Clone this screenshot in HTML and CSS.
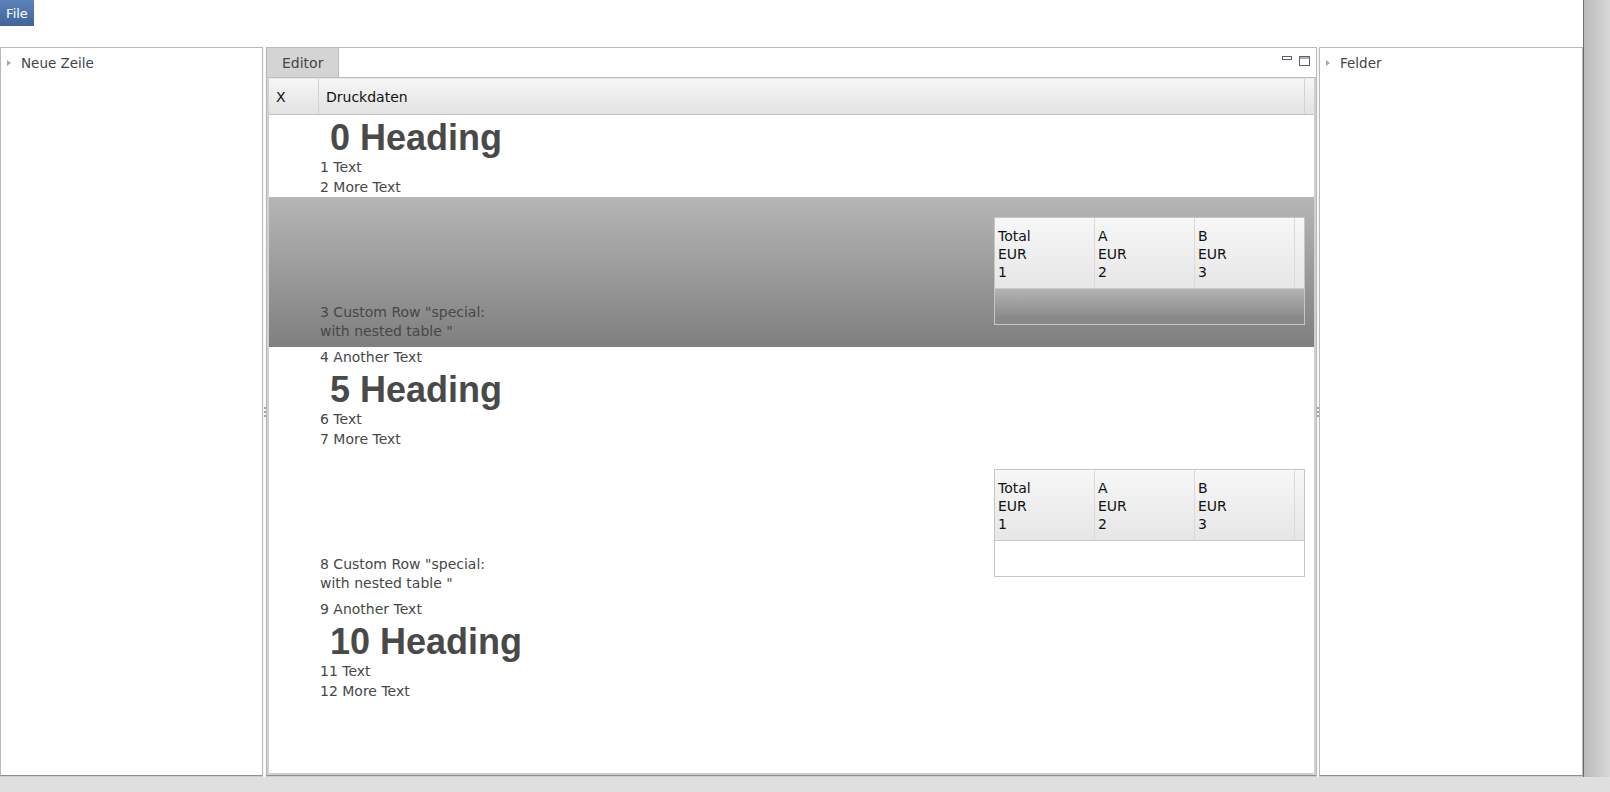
FILE: index.html
```html
<!DOCTYPE html>
<html lang="de">
<head>
    <meta charset="UTF-8">
    <meta name="viewport" content="width=device-width, initial-scale=1.0">
    <title>Druckdaten Editor</title>
    <link rel="stylesheet" href="styles.css">
</head>
<body>

<div class="app">
    <div class="menubar">
        <button class="menu-file">File</button>
    </div>

    <div class="workspace">
        <div class="panel side">
            <div class="tree-item"><span class="arrow"></span>Neue Zeile</div>
        </div>

        <div class="divider"><span class="grip"></span></div>

        <div class="panel center">
            <div class="tabbar">
                <div class="tab">Editor</div>
                <div class="win-btns">
                    <svg width="10" height="5" viewBox="0 0 10 5"><rect x="0.5" y="0.5" width="9" height="3" fill="none" stroke="#5a5f6e"/></svg>
                    <svg width="11" height="10" viewBox="0 0 11 10"><rect x="0.5" y="0.5" width="10" height="9" fill="none" stroke="#5a5f6e"/><line x1="0" y1="2" x2="11" y2="2" stroke="#5a5f6e"/></svg>
                </div>
            </div>
            <div class="tab-content">
                <div class="grid-head">
                    <div class="hc col-x">X</div>
                    <div class="hc col-main">Druckdaten</div>
                    <div class="hc col-fill"></div>
                </div>
                <div id="rows" class="grid-body"></div>
            </div>
        </div>

        <div class="divider narrow"><span class="grip"></span></div>

        <div class="panel side">
            <div class="tree-item"><span class="arrow"></span>Felder</div>
        </div>
    </div>
</div>

<script>
    // Zeilen-Muster wiederholt sich alle 5 Einträge
    const rows = document.getElementById("rows");
    const selectedRow = 3;

    function nestedTable() {
        return '<div class="nested">' +
            '<div class="nested-head">' +
            '<div class="ncell">Total<br>EUR<br>1</div>' +
            '<div class="ncell">A<br>EUR<br>2</div>' +
            '<div class="ncell">B<br>EUR<br>3</div>' +
            '<div class="ncell fill"></div>' +
            '</div>' +
            '<div class="nested-body"></div>' +
            '</div>';
    }

    for (let i = 0; i <= 12; i++) {
        const row = document.createElement("div");
        const kind = i % 5;
        row.classList.add("row");

        if (kind === 0) {
            row.classList.add("heading");
            row.textContent = i + " Heading";
        } else if (kind === 1) {
            row.textContent = i + " Text";
        } else if (kind === 2) {
            row.textContent = i + " More Text";
        } else if (kind === 3) {
            row.classList.add("custom");
            if (i === selectedRow) row.classList.add("selected");
            row.innerHTML = '<div class="custom-text">' + i + ' Custom Row "special:<br>with nested table "</div>' + nestedTable();
        } else {
            row.textContent = i + " Another Text";
        }
        rows.appendChild(row);
    }
</script>

</body>
</html>
```

FILE: styles.css
```css
/* Grundlayout */
html, body {
    margin: 0;
    padding: 0;
}

body {
    background: #dfdfdf linear-gradient(to right, #bababa, #d8d8d8) no-repeat 1584px 0 / 26px 777px;
    font-family: "DejaVu Sans", Verdana, sans-serif;
    font-size: 14px;
    color: #333;
}

.app {
    width: 1584px;
    height: 777px;
    box-sizing: border-box;
    background-color: white;
    border-right: 1px solid #6e6e6e;
    display: flex;
    flex-direction: column;
}

/* Menüleiste */
.menubar {
    height: 47px;
    flex: none;
}

.menu-file {
    display: block;
    width: 34px;
    height: 26px;
    margin: 0;
    padding: 0;
    border: none;
    background: linear-gradient(#5d83ba, #3e6499);
    color: white;
    font-family: "DejaVu Sans", sans-serif;
    font-size: 13px;
}

/* Arbeitsbereich mit drei Panels */
.workspace {
    flex: 1;
    display: flex;
    min-height: 0;
}

.panel {
    box-sizing: border-box;
    background-color: white;
    border: 1px solid #b8b8b8;
    border-bottom-color: #8f8f8f;
    box-shadow: 0 1px 1px rgba(0, 0, 0, 0.2);
    height: 729px;
}

.panel.side {
    flex: 1;
    padding-top: 5px;
}

.panel.side:first-child {
    flex: none;
    width: 263px;
}

.tree-item {
    display: flex;
    align-items: center;
    height: 20px;
    padding-left: 6px;
    font-size: 13.5px;
    color: #444;
}

.arrow {
    width: 0;
    height: 0;
    border-top: 3px solid transparent;
    border-bottom: 3px solid transparent;
    border-left: 4px solid #a8a8a8;
    margin-right: 10px;
}

/* Splitter */
.divider {
    width: 3px;
    flex: none;
    display: flex;
    align-items: center;
    justify-content: center;
}

.divider.narrow {
    width: 2px;
}

.grip {
    width: 2px;
    height: 10px;
    background: repeating-linear-gradient(#a9a9a9 0, #a9a9a9 2px, transparent 2px, transparent 4px);
}

/* Mittleres Panel mit Tab */
.panel.center {
    width: 1051px;
    flex: none;
    display: flex;
    flex-direction: column;
}

.tabbar {
    height: 29px;
    flex: none;
    display: flex;
    border-bottom: 1px solid #bcbcbc;
}

.tab {
    width: 72px;
    box-sizing: border-box;
    padding: 2px 0 0 15px;
    background-color: #d4d4d4;
    border-right: 1px solid #bcbcbc;
    color: #444;
    line-height: 27px;
}

.win-btns {
    margin-left: auto;
    margin-right: 6px;
    display: flex;
    align-items: flex-start;
    gap: 7px;
    padding-top: 8px;
}

.win-btns svg {
    display: block;
}

.tab-content {
    flex: 1;
    border: 2px solid #d0d0d0;
    border-top: 1px solid #e6e6e6;
    overflow: hidden;
}

/* Tabellenkopf */
.grid-head {
    display: flex;
    height: 35px;
    background: linear-gradient(#f6f6f6, #e2e2e2);
    border-bottom: 1px solid #c2c2c2;
}

.hc {
    box-sizing: border-box;
    padding: 2px 0 0 7px;
    line-height: 33px;
    color: #111;
    border-right: 1px solid #d2d2d2;
}

.col-x {
    width: 50px;
}

.col-main {
    flex: 1;
}

.col-fill {
    width: 9px;
    border-right: none;
}

/* Zeilen */
.row {
    height: 20px;
    line-height: 20px;
    padding-left: 51px;
    color: #474747;
}

.row.heading {
    box-sizing: border-box;
    height: 42px;
    padding-top: 3px;
    line-height: 40px;
    padding-left: 61px;
    font-family: "Liberation Sans", Arial, sans-serif;
    font-weight: bold;
    font-size: 36px;
    color: #494949;
}

.row.custom {
    height: 150px;
    display: flex;
    justify-content: space-between;
    align-items: flex-start;
    line-height: 19px;
}

.row.custom.selected {
    background: linear-gradient(#b6b6b6, #7f7f7f);
}

.custom-text {
    align-self: flex-end;
    padding-bottom: 6px;
}

/* Verschachtelte Tabelle */
.nested {
    width: 311px;
    height: 108px;
    box-sizing: border-box;
    margin-top: 20px;
    margin-right: 9px;
    border: 1px solid #c6c6c6;
    display: flex;
    flex-direction: column;
}

.nested-head {
    display: flex;
    height: 70px;
    background: linear-gradient(#f7f7f7, #e6e6e6);
    border-bottom: 1px solid #c9c9c9;
}

.ncell {
    width: 100px;
    box-sizing: border-box;
    padding: 9px 0 0 3px;
    line-height: 18px;
    color: #111;
    border-right: 1px solid #dadada;
}

.ncell.fill {
    flex: 1;
    width: auto;
    border-right: none;
}

.nested-body {
    flex: 1;
    background-color: white;
}

.selected .nested-body {
    background: linear-gradient(#b3b3b3, #8d8d8d 76%, #898989 76%);
}
```
